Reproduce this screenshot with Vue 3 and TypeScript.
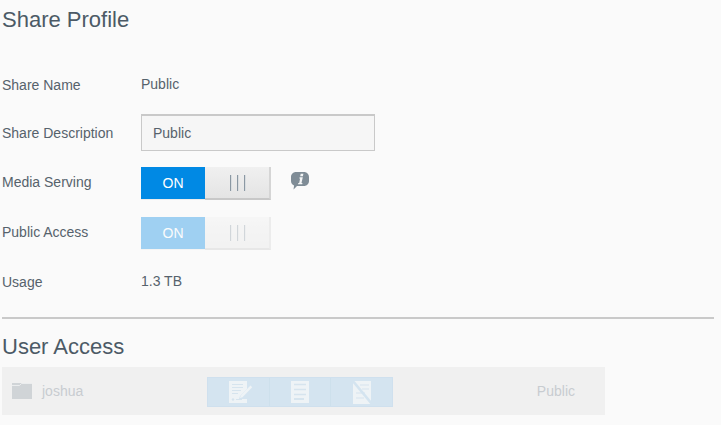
<script setup lang="ts">
const lines = [0, 1, 2]
</script>

<template>
  <div class="page">
    <h1 class="title">Share Profile</h1>

    <div class="form">
      <div class="row row-name">
        <label class="label">Share Name</label>
        <span class="value">Public</span>
      </div>
      <div class="row row-desc">
        <label class="label">Share Description</label>
        <div class="input">Public</div>
      </div>
      <div class="row row-media">
        <label class="label">Media Serving</label>
        <div class="toggle">
          <span class="toggle-on">ON</span>
          <span class="toggle-off">
            <i v-for="n in lines" :key="n" class="grip"></i>
          </span>
        </div>
        <svg class="info" width="18" height="18" viewBox="0 0 18 18">
          <path
            d="M5 0h8c2.800 0 5 2.200 5 5v4c0 2.800-2.200 5-5 5H6l-3.500 3.500.6-4C1.200 12.700 0 11 0 9V5c0-2.800 2.200-5 5-5z"
            fill="#7f8c96"
          />
          <path d="M9.700 1.800h2.700l-.5 2.500H9.200zM8.700 5.200h3.100l-1.300 5.800h1l-.3 1.200H7l.3-1.200h.9l.9-4.600h-.9z" fill="#f4f5f6" />
        </svg>
      </div>
      <div class="row row-public">
        <label class="label">Public Access</label>
        <div class="toggle toggle-disabled">
          <span class="toggle-on">ON</span>
          <span class="toggle-off">
            <i v-for="n in lines" :key="n" class="grip"></i>
          </span>
        </div>
      </div>
      <div class="row row-usage">
        <label class="label">Usage</label>
        <span class="value">1.3 TB</span>
      </div>
    </div>

    <hr class="divider" />

    <h2 class="title title-user">User Access</h2>

    <div class="user-row">
      <svg class="folder" width="20" height="16" viewBox="0 0 20 16">
        <path d="M0 0h20v16H0z" fill="#d0d4d7" />
        <path d="M0 2.500h7.500l2-2H20" stroke="#eeeff0" stroke-width="0.900" fill="none" />
      </svg>
      <span class="user-name">joshua</span>
      <div class="perms">
        <div class="perm">
          <svg class="perm-write" width="24" height="22" viewBox="0 0 24 22">
            <path d="M0 0h18v8l-7 7-1 3h8v4H0z" fill="#eef3f6" />
            <path d="M3 3.500h11M3 6.500h11M3 9.500h9M3 12.500h6" stroke="#d6e4ee" stroke-width="1.200" />
            <path d="M7 18.500h6" stroke="#d6e4ee" stroke-width="1" />
            <circle cx="4" cy="18.500" r="1.200" fill="#d6e4ee" />
            <path d="M11 17l.8-2.600L21.500 4.500l1.700 1.700-9.700 10z" fill="#eef3f6" />
          </svg>
        </div>
        <div class="perm">
          <svg width="18" height="22" viewBox="0 0 18 22">
            <path d="M0 0h18v22H0z" fill="#eef3f6" />
            <path d="M3 3.500h12M3 8.500h12M3 13.500h12" stroke="#d6e4ee" stroke-width="1.500" />
            <path d="M3 18h10" stroke="#d6e4ee" stroke-width="2" />
          </svg>
        </div>
        <div class="perm">
          <svg width="20" height="24" viewBox="0 0 20 24">
            <path d="M1 1h18v23H1z" fill="#eef3f6" />
            <path d="M8 5h9M10 9h7M4 13h9M4 18h8" stroke="#d6e4ee" stroke-width="1.200" />
            <path d="M0 0l20 24" stroke="#d4e4f0" stroke-width="2.600" />
          </svg>
        </div>
      </div>
      <span class="user-access">Public</span>
    </div>
  </div>
</template>

<style scoped>
.page {
  width: 721px;
  height: 425px;
  overflow: hidden;
  background: #fafafa;
  font-family: "Liberation Sans", Arial, sans-serif;
  color: #56626c;
  box-sizing: border-box;
  padding: 0 7px 0 2px;
}

.title {
  margin: 0;
  font-size: 22px;
  font-weight: 400;
  line-height: 26px;
  padding-top: 7px;
  color: #4c5a66;
}

.form {
  padding-top: 35px;
}

.row {
  display: flex;
  align-items: center;
  font-size: 14px;
}

.label {
  width: 139px;
  flex: none;
}

.row-name,
.row-usage {
  height: 34px;
}

.row-name .value,
.row-usage .value {
  margin-top: -2px;
}

.row-desc {
  height: 37px;
  margin-top: 12px;
}

.row-media {
  height: 33px;
  margin-top: 16px;
}

.row-public {
  height: 33px;
  margin-top: 17px;
}

.row-media .label,
.row-public .label {
  margin-top: -4px;
}

.row-usage {
  margin-top: 15px;
}

.input {
  width: 234px;
  height: 37px;
  box-sizing: border-box;
  border: 1px solid #c9c9c9;
  border-top-width: 2px;
  background: #f6f6f6;
  padding-left: 11px;
  line-height: 35px;
}

.toggle {
  display: flex;
  width: 130px;
  height: 33px;
  background: #ececec;
}

.toggle-on {
  width: 64px;
  height: 32px;
  background: #0089e4;
  color: #fff;
  text-align: center;
  line-height: 32px;
  font-size: 14px;
}

.toggle-off {
  flex: 1;
  display: flex;
  justify-content: center;
  align-items: center;
  gap: 6px;
  background: linear-gradient(#f0f0f0, #e4e4e4);
  border-right: 2px solid #d5d5d5;
  border-bottom: 2px solid #c8c8c8;
}

.grip {
  width: 1px;
  height: 16px;
  background: #8b98a3;
  box-shadow: 1px 0 0 #d9dde0;
}

.toggle-disabled {
  opacity: 0.36;
}

.info {
  margin-left: 20px;
  margin-top: -5px;
}

.divider {
  margin: 18px 0 0;
  border: 0;
  border-top: 2px solid #c9c9c9;
}

.title-user {
  padding-top: 15px;
}

.user-row {
  display: flex;
  align-items: center;
  width: 603px;
  height: 48px;
  margin-top: 7px;
  background: #f0f0f0;
  font-size: 14px;
  color: #c8ccd0;
}

.folder {
  margin-left: 10px;
}

.user-name {
  margin-left: 10px;
  width: 165px;
}

.perms {
  display: flex;
  width: 186px;
  height: 30px;
  margin-top: 2px;
  background: #d4e4f0;
  border: 1px solid #cfe0ee;
  box-sizing: border-box;
}

.perm {
  flex: 1;
  display: flex;
  justify-content: center;
  align-items: center;
  border-left: 1px solid #cde0ec;
}

.perm:first-child {
  border-left: 0;
}

.perm-write {
  margin-left: 6px;
}

.user-access {
  margin-left: auto;
  margin-right: 30px;
}
</style>

<style>
html,
body {
  margin: 0;
  background: #fafafa;
}
</style>
